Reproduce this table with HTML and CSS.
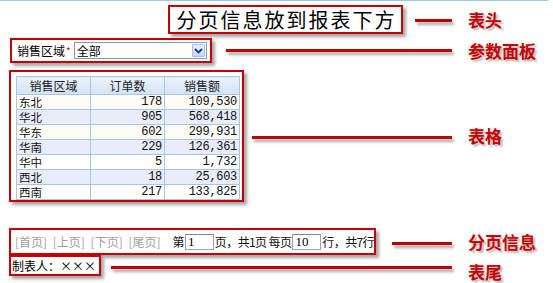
FILE: index.html
```html
<!DOCTYPE html>
<html lang="zh-CN">
<head>
<meta charset="utf-8">
<title>分页信息放到报表下方</title>
<link rel="stylesheet" href="styles.css">
</head>
<body>
<div class="page">
  <div class="row row-title">
    <div class="box title-box">分页信息放到报表下方</div>
    <div class="line"></div>
    <div class="label">表头</div>
  </div>
  <div class="row row-param">
    <div class="box param-box">
      <span class="param-name">销售区域</span><span class="req">*</span>
      <div class="select"><span class="select-text">全部</span><span class="select-btn"><svg width="9" height="6" viewBox="0 0 9 6"><path d="M1 1 L4.5 4.5 L8 1" fill="none" stroke="#1f3f7a" stroke-width="1.8"/></svg></span></div>
    </div>
    <div class="line"></div>
    <div class="label">参数面板</div>
  </div>
  <div class="row row-table">
    <div class="box table-box">
      <table class="grid">
        <thead>
          <tr><th class="c1">销售区域</th><th class="c2">订单数</th><th class="c3">销售额</th></tr>
        </thead>
        <tbody>
          <tr class="r-a"><td>东北</td><td class="num">178</td><td class="num">109,530</td></tr>
          <tr class="r-b"><td>华北</td><td class="num">905</td><td class="num">568,418</td></tr>
          <tr class="r-a"><td>华东</td><td class="num">602</td><td class="num">299,931</td></tr>
          <tr class="r-b"><td>华南</td><td class="num">229</td><td class="num">126,361</td></tr>
          <tr class="r-c"><td>华中</td><td class="num">5</td><td class="num">1,732</td></tr>
          <tr class="r-b"><td>西北</td><td class="num">18</td><td class="num">25,603</td></tr>
          <tr class="r-c"><td>西南</td><td class="num">217</td><td class="num">133,825</td></tr>
        </tbody>
      </table>
    </div>
    <div class="line"></div>
    <div class="label">表格</div>
  </div>
  <div class="row row-paging">
    <div class="box paging-box">
      <span class="nav">[首页] [上页] [下页] [尾页]</span>
      <span class="txt">第</span><span class="inp">1</span><span class="txt">页，共1页&nbsp;每页</span><span class="inp">10</span><span class="txt">行，共7行</span>
    </div>
    <div class="line"></div>
    <div class="label">分页信息</div>
  </div>
  <div class="row row-footer">
    <div class="box footer-box">制表人：×××</div>
    <div class="line"></div>
    <div class="label">表尾</div>
  </div>
</div>
</body>
</html>
```

FILE: styles.css
```css
* { box-sizing: border-box; }
html, body { margin: 0; padding: 0; background: #fff; }
body {
  font-family: "Noto Sans CJK SC", "Liberation Sans", sans-serif;
  font-size: 12px;
  color: #000;
  width: 553px;
  height: 283px;
  overflow: hidden;
}
.page {
  width: 548px;
  border-top: 1px solid #9cc7ec;
  padding-top: 4px;
  display: flex;
  flex-direction: column;
}
.row {
  display: flex;
  align-items: center;
}
.box {
  border: 2px solid #c80000;
  background: #fff;
  box-shadow: 3px 3px 3px rgba(0,0,0,0.35);
}
.line {
  flex: 1;
  height: 3px;
  background: #c00000;
  margin-right: 16px;
  box-shadow: 2px 3px 3px rgba(0,0,0,0.35);
}
.label {
  width: 80px;
  font-size: 17px;
  font-weight: bold;
  color: #c80000;
  line-height: 20px;
  text-shadow: 2px 2px 2px rgba(0,0,0,0.3);
  white-space: nowrap;
}

/* title */
.row-title { height: 29px; }
.title-box {
  margin-left: 168px;
  width: 235px;
  height: 29px;
  font-size: 20px;
  line-height: 25px;
  letter-spacing: 2px;
  text-align: center;
  padding-left: 2px;
}
.row-title .line { margin-left: 12px; margin-top: 2px; }

/* param */
.row-param { margin-top: 4px; }
.param-box {
  margin-left: 10px;
  width: 202px;
  height: 25px;
  display: flex;
  align-items: center;
  padding-left: 5px;
}
.param-name { font-size: 12px; line-height: 14px; }
.req { color: #e00000; font-size: 10px; margin: 0 1px 0 1px; line-height: 10px; }
.select {
  margin-left: 2px;
  width: 133px;
  height: 17px;
  border: 1px solid #7f9db9;
  display: flex;
  align-items: center;
  justify-content: space-between;
  padding: 1px;
}
.select-text { padding-left: 1px; line-height: 13px; }
.select-btn {
  width: 13px;
  height: 13px;
  border: 1px solid #a8bfe3;
  background: linear-gradient(#e7effc, #c4d6f6);
  display: flex;
  align-items: center;
  justify-content: center;
  border-radius: 1px;
}
.row-param .line { margin-left: 14px; }

/* table */
.row-table { margin-top: 7px; }
.table-box {
  margin-left: 9px;
  width: 235px;
  height: 132px;
  padding: 4px 0 0 5px;
}
.grid {
  border-collapse: collapse;
  font-size: 12px;
  color: #111;
}
.grid th, .grid td {
  border: 1px solid #a6c6ea;
  padding: 0 2px;
  height: 15px;
  line-height: 13px;
  white-space: nowrap;
  overflow: hidden;
}
.grid th {
  height: 18px;
  font-weight: normal;
  text-align: center;
  font-family: "Noto Sans CJK SC", sans-serif;
  background: linear-gradient(#edf3fc, #d2e2f6);
  color: #222;
}
.grid td { font-family: "Noto Sans CJK SC", sans-serif; font-size: 11.5px; }
.grid td.num { text-align: right; font-family: "Liberation Mono", monospace; font-size: 12px; letter-spacing: -0.3px; }
.c1 { width: 74px; }
.c2 { width: 74px; }
.c3 { width: 75px; }
.r-a { background: #fcfbf4; }
.r-b { background: #e8ecfb; }
.r-c { background: #fff; }
.row-table .line { margin-left: 8px; margin-top: 2px; }

/* paging */
.row-paging { margin-top: 26px; }
.paging-box {
  margin-left: 9px;
  width: 367px;
  height: 27px;
  display: flex;
  align-items: center;
  padding-left: 4px;
  font-size: 12px;
}
.nav {
  color: #a0a0a0;
  word-spacing: 3px;
  margin-right: 12px;
  white-space: nowrap;
}
.txt { white-space: nowrap; color: #111; letter-spacing: -0.6px; }
.inp {
  display: inline-block;
  width: 30px;
  height: 16px;
  border: 1px solid #9aa5b4;
  border-top-color: #7a8595;
  line-height: 14px;
  padding-left: 2px;
  font-family: "Liberation Serif", serif;
  font-size: 13px;
  margin: 0 1px;
}
.row-paging .line { margin-left: 16px; margin-top: 3px; }

/* footer */
.row-footer { align-items: flex-start; }
.footer-box {
  margin-left: 9px;
  width: 92px;
  height: 21px;
  padding-left: 1px;
  line-height: 17px;
  font-size: 12px;
}
.row-footer .line { margin-left: 10px; margin-top: 11px; }
.row-footer .label { margin-top: 7px; }
```
